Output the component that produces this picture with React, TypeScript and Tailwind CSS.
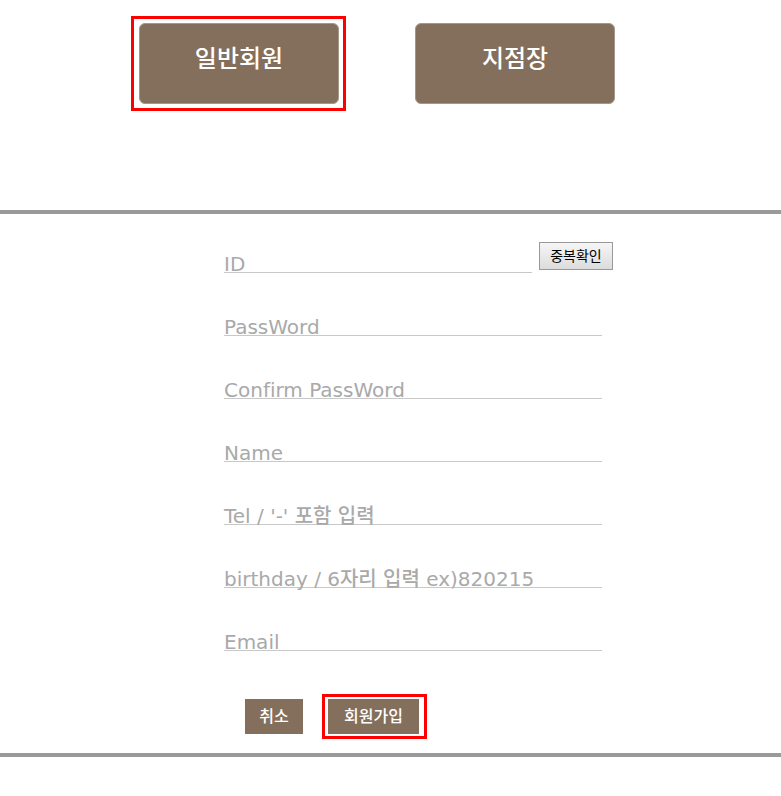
import type { ReactNode } from 'react';

type FieldProps = {
  id: string;
  label: string;
  type?: string;
  children?: ReactNode;
};

const fields = [
  { id: 'password', label: 'PassWord', type: 'password' },
  { id: 'confirm', label: 'Confirm PassWord', type: 'password' },
  { id: 'name', label: 'Name', type: 'text' },
  { id: 'tel', label: "Tel / '-' 포함 입력", type: 'tel' },
  { id: 'birthday', label: 'birthday / 6자리 입력 ex)820215', type: 'text' },
  { id: 'email', label: 'Email', type: 'email' },
];

/* The label floats over the input and rests on its underline. */
function Field({ id, label, type = 'text', children }: FieldProps) {
  return (
    <div className="flex items-start">
      <div className="relative min-w-0 flex-1">
        <input
          id={id}
          type={type}
          className="block h-[30px] w-full border-b border-[#c8c8c8] bg-transparent text-[20px] text-[#555555] outline-none"
        />
        <label
          htmlFor={id}
          className="pointer-events-none absolute -bottom-[3px] left-0 text-[20px] leading-6 font-medium whitespace-nowrap text-[#a9a9a9] [font-variant-ligatures:none]"
        >
          {label}
        </label>
      </div>
      {children}
    </div>
  );
}

export default function App() {
  return (
    <main className="bg-white font-['DejaVu_Sans','Noto_Sans_CJK_KR',sans-serif]">
      <div className="flex items-start pt-4 pl-[131px]">
        <div className="border-[3px] border-[#ff0000] py-1 pr-1 pl-[5px]">
          <button
            type="button"
            className="block h-[81px] w-[200px] rounded-md border border-[#a59789] bg-[#846f5c] pb-2.5 text-[24px] leading-8 font-medium text-white"
          >
            일반회원
          </button>
        </div>
        <button
          type="button"
          className="mt-[7px] ml-[69px] block h-[81px] w-[200px] rounded-md border border-[#a59789] bg-[#846f5c] pb-2.5 text-[24px] leading-8 font-medium text-white"
        >
          지점장
        </button>
      </div>

      <form className="mt-[99px] border-y-4 border-[#9a9a9a] pt-[29px] pb-[14px] pl-56">
        <div className="flex w-[378px] flex-col gap-[33px]">
          <div className="-mr-[11px]">
            <Field id="userid" label="ID">
              <button
                type="button"
                className="-mt-px ml-[7px] h-7 w-[74px] border border-[#999999] bg-linear-to-b from-[#f6f6f6] to-[#dcdcdc] text-[14px] leading-5 text-black"
              >
                중복확인
              </button>
            </Field>
          </div>
          {fields.map((field) => (
            <Field key={field.id} {...field} />
          ))}
        </div>

        <div className="mt-[43px] flex items-center pl-[21px]">
          <button
            type="button"
            className="h-[35px] w-[58px] bg-[#846f5c] text-[16px] leading-5 font-medium text-white"
          >
            취소
          </button>
          <div className="ml-[19px] border-[3px] border-[#ff0000] py-0.5 pr-[5px] pl-[3px]">
            <button
              type="submit"
              className="block h-[35px] w-[91px] bg-[#846f5c] text-[16px] leading-5 font-medium text-white"
            >
              회원가입
            </button>
          </div>
        </div>
      </form>
    </main>
  );
}
